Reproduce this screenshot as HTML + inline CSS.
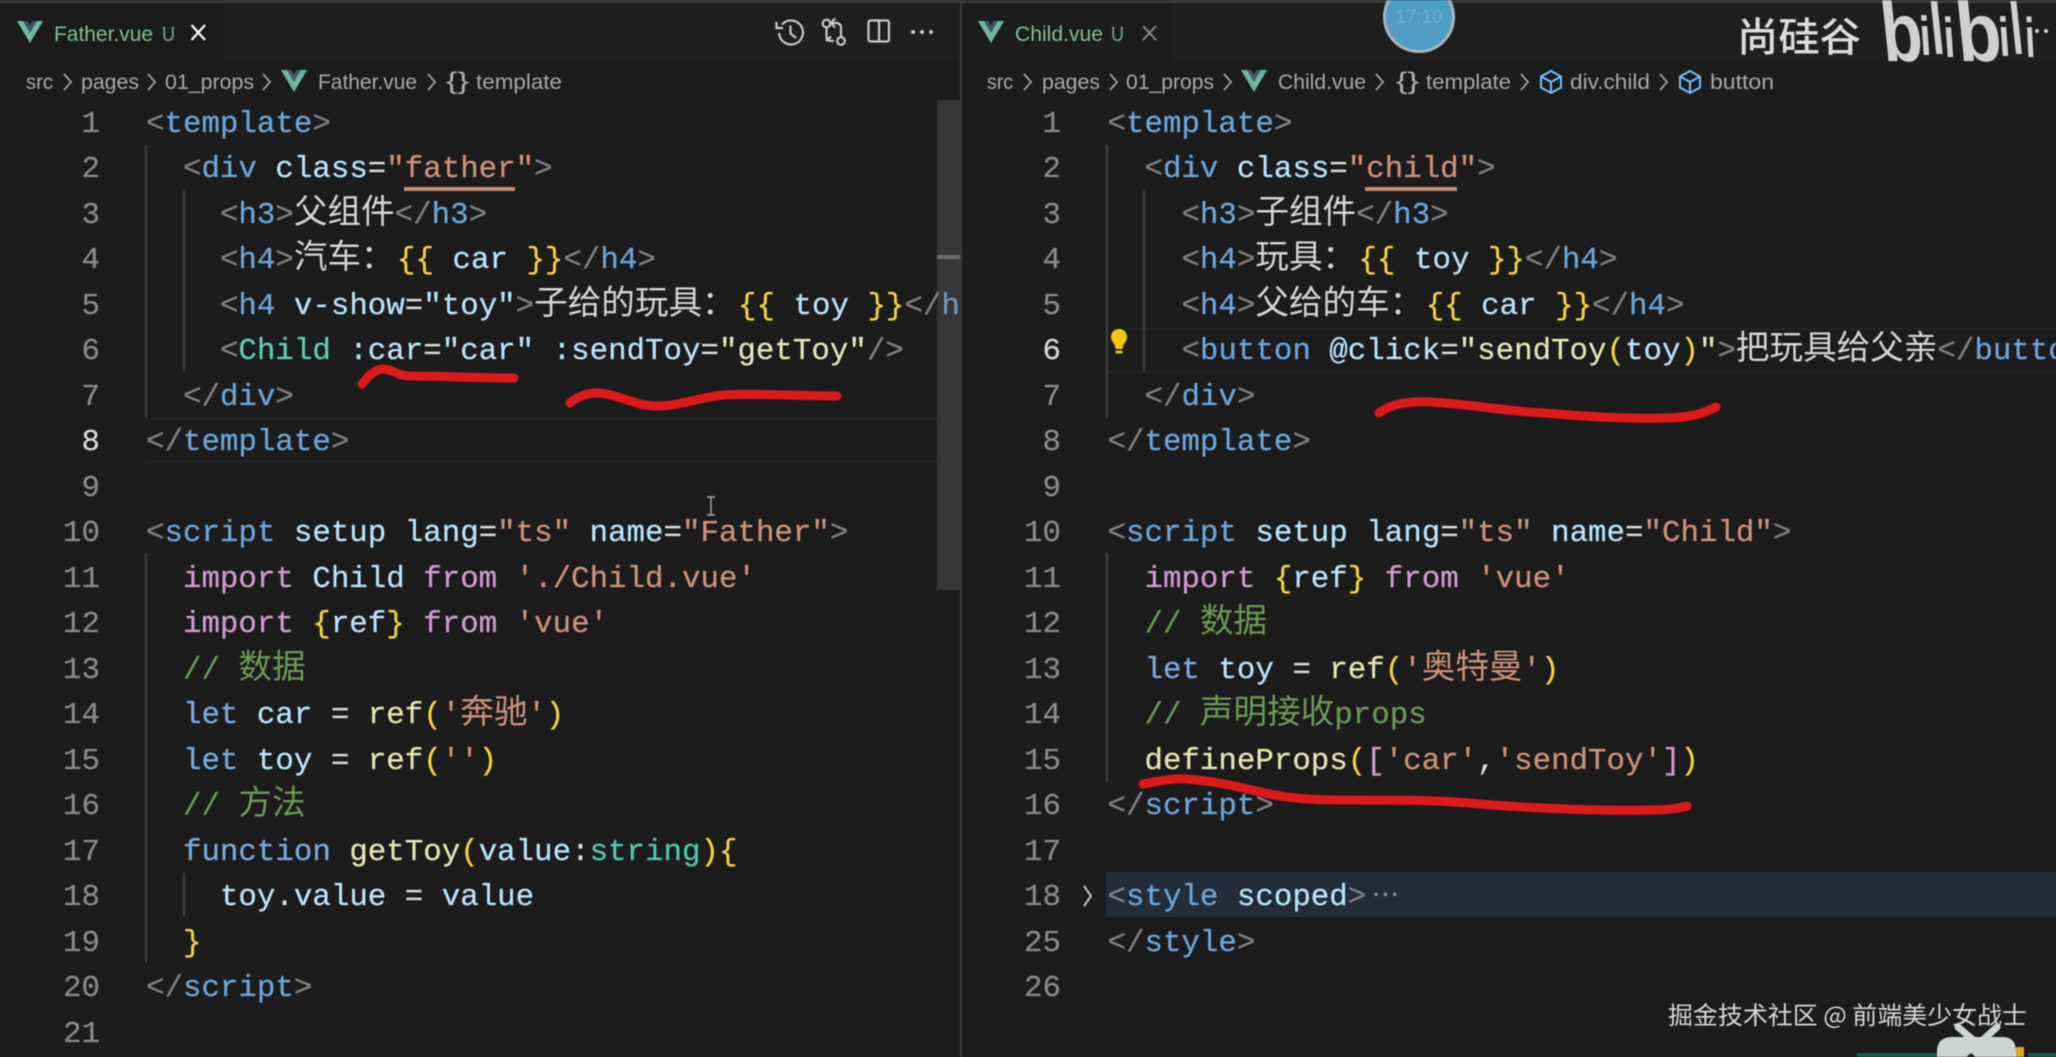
<!DOCTYPE html>
<html lang="zh"><head><meta charset="utf-8"><title>Father.vue / Child.vue</title>
<style>
html,body{margin:0;padding:0;background:#1c1c1c;width:2056px;height:1057px;overflow:hidden}
#root{position:absolute;left:0;top:0;width:2056px;height:1057px;overflow:hidden;background:#1c1c1c;filter:blur(.45px)}
.abs{position:absolute}
.pane{position:absolute;top:0;height:1057px;overflow:hidden}
.l{position:absolute;white-space:pre;height:45.5px;top:calc(101.5px + var(--n)*45.5px);font:30.8px/45.5px "Liberation Mono","Noto Sans CJK SC",monospace;color:#d4d4d4;-webkit-text-stroke:.25px}
.ln{position:absolute;white-space:pre;text-align:right;width:60px;top:calc(101.5px + var(--n)*45.5px);font:30.8px/45.5px "Liberation Mono",monospace;color:#8a8a8a;-webkit-text-stroke:.2px}
.x{left:146px}.rx{left:145.5px}
.lnL{left:40px}.lnR{left:39px}
.on{color:#d8d8d8}
.z{font-family:"Noto Sans CJK SC","Liberation Sans",sans-serif;font-size:33.6px;line-height:0;-webkit-text-stroke:0}
.q{font-family:"Noto Sans CJK SC","Liberation Sans",sans-serif;font-size:33px;line-height:0;display:inline-block;width:36px;-webkit-text-stroke:0}
.p{color:#808080}.t{color:#6aa5dc}.a{color:#b8e3fa}.s{color:#ce9178}.w{color:#d8d8d8}.y{color:#f5d33c}.f{color:#e4e4b4}.g{color:#6a9955}.k{color:#78a9e0}.m{color:#c58fc5}.n{color:#5fcdb4}.c{color:#4ec9b0}.b{color:#cf9bcf}
</style></head><body><div id="root">

<!-- chrome -->
<div class="abs" style="left:0;top:0;width:2056px;height:3px;background:#3c3c3c"></div>
<div class="abs" style="left:0;top:3px;width:2056px;height:59px;background:#1f1f1f"></div>
<div class="abs" style="left:0;top:3px;width:223px;height:59px;background:#1b1b1b"></div>
<div class="abs" style="left:962px;top:3px;width:210px;height:59px;background:#1c1c1c"></div>
<!-- active line highlights -->
<div class="abs" style="left:146px;top:418px;width:791px;height:41px;border:solid #242424;border-width:2px 0"></div>
<div class="abs" style="left:1106px;top:328px;width:950px;height:41px;border:solid #242424;border-width:2px 0"></div>
<div class="abs" style="left:1106px;top:872px;width:950px;height:45px;background:#232c38"></div>
<!-- indent guides -->
<div class="abs" style="left:145px;top:145px;width:1.5px;height:273px;background:#404040"></div>
<div class="abs" style="left:183px;top:190px;width:1.5px;height:182px;background:#404040"></div>
<div class="abs" style="left:145px;top:553px;width:1.5px;height:410px;background:#404040"></div>
<div class="abs" style="left:183px;top:873px;width:1.5px;height:44px;background:#404040"></div>
<div class="abs" style="left:1106px;top:145px;width:1.5px;height:273px;background:#404040"></div>
<div class="abs" style="left:1143px;top:190px;width:1.5px;height:182px;background:#404040"></div>
<div class="abs" style="left:1106px;top:553px;width:1.5px;height:229px;background:#404040"></div>
<!-- word highlights -->
<div class="abs" style="left:404px;top:187px;width:111px;height:4px;background:#c58f70"></div>
<div class="abs" style="left:1365px;top:187px;width:92px;height:4px;background:#c58f70"></div>

<!-- LEFT PANE -->
<div class="pane" style="left:0;width:960px">
<div class="ln lnL" style="--n:0">1</div>
<div class="ln lnL" style="--n:1">2</div>
<div class="ln lnL" style="--n:2">3</div>
<div class="ln lnL" style="--n:3">4</div>
<div class="ln lnL" style="--n:4">5</div>
<div class="ln lnL" style="--n:5">6</div>
<div class="ln lnL" style="--n:6">7</div>
<div class="ln lnL on" style="--n:7">8</div>
<div class="ln lnL" style="--n:8">9</div>
<div class="ln lnL" style="--n:9">10</div>
<div class="ln lnL" style="--n:10">11</div>
<div class="ln lnL" style="--n:11">12</div>
<div class="ln lnL" style="--n:12">13</div>
<div class="ln lnL" style="--n:13">14</div>
<div class="ln lnL" style="--n:14">15</div>
<div class="ln lnL" style="--n:15">16</div>
<div class="ln lnL" style="--n:16">17</div>
<div class="ln lnL" style="--n:17">18</div>
<div class="ln lnL" style="--n:18">19</div>
<div class="ln lnL" style="--n:19">20</div>
<div class="ln lnL" style="--n:20">21</div>

<div class="l x" style="--n:0"><span class="p">&lt;</span><span class="t">template</span><span class="p">&gt;</span></div>
<div class="l x" style="--n:1">  <span class="p">&lt;</span><span class="t">div</span> <span class="a">class</span><span class="w">=</span><span class="s">"father"</span><span class="p">&gt;</span></div>
<div class="l x" style="--n:2">    <span class="p">&lt;</span><span class="t">h3</span><span class="p">&gt;</span><span class="z">父组件</span><span class="p">&lt;/</span><span class="t">h3</span><span class="p">&gt;</span></div>
<div class="l x" style="--n:3">    <span class="p">&lt;</span><span class="t">h4</span><span class="p">&gt;</span><span class="z">汽车</span><span class="q">：</span><span class="y">{{</span> <span class="a">car</span> <span class="y">}}</span><span class="p">&lt;/</span><span class="t">h4</span><span class="p">&gt;</span></div>
<div class="l x" style="--n:4">    <span class="p">&lt;</span><span class="t">h4</span> <span class="a">v-show</span><span class="w">=</span><span class="a">"toy"</span><span class="p">&gt;</span><span class="z">子给的玩具</span><span class="q">：</span><span class="y">{{</span> <span class="a">toy</span> <span class="y">}}</span><span class="p">&lt;/</span><span class="t">h4</span><span class="p">&gt;</span></div>
<div class="l x" style="--n:5">    <span class="p">&lt;</span><span class="n">Child</span> <span class="a">:car</span><span class="w">=</span><span class="a">"car"</span> <span class="a">:sendToy</span><span class="w">=</span><span class="f">"getToy"</span><span class="p">/&gt;</span></div>
<div class="l x" style="--n:6">  <span class="p">&lt;/</span><span class="t">div</span><span class="p">&gt;</span></div>
<div class="l x" style="--n:7"><span class="p">&lt;/</span><span class="t">template</span><span class="p">&gt;</span></div>
<div class="l x" style="--n:9"><span class="p">&lt;</span><span class="t">script</span> <span class="a">setup</span> <span class="a">lang</span><span class="w">=</span><span class="s">"ts"</span> <span class="a">name</span><span class="w">=</span><span class="s">"Father"</span><span class="p">&gt;</span></div>
<div class="l x" style="--n:10">  <span class="b">import</span> <span class="a">Child</span> <span class="b">from</span> <span class="s">'./Child.vue'</span></div>
<div class="l x" style="--n:11">  <span class="b">import</span> <span class="y">{</span><span class="a">ref</span><span class="y">}</span> <span class="b">from</span> <span class="s">'vue'</span></div>
<div class="l x" style="--n:12">  <span class="g">// <span class="z">数据</span></span></div>
<div class="l x" style="--n:13">  <span class="k">let</span> <span class="a">car</span> <span class="w">=</span> <span class="f">ref</span><span class="y">(</span><span class="s">'<span class="z">奔驰</span>'</span><span class="y">)</span></div>
<div class="l x" style="--n:14">  <span class="k">let</span> <span class="a">toy</span> <span class="w">=</span> <span class="f">ref</span><span class="y">(</span><span class="s">''</span><span class="y">)</span></div>
<div class="l x" style="--n:15">  <span class="g">// <span class="z">方法</span></span></div>
<div class="l x" style="--n:16">  <span class="k">function</span> <span class="f">getToy</span><span class="y">(</span><span class="a">value</span><span class="w">:</span><span class="c">string</span><span class="y">){</span></div>
<div class="l x" style="--n:17">    <span class="a">toy</span><span class="w">.</span><span class="a">value</span> <span class="w">=</span> <span class="a">value</span></div>
<div class="l x" style="--n:18">  <span class="y">}</span></div>
<div class="l x" style="--n:19"><span class="p">&lt;/</span><span class="t">script</span><span class="p">&gt;</span></div>
</div>
<!-- scrollbar -->
<div class="abs" style="left:937px;top:100px;width:23px;height:490px;background:rgba(121,121,121,.28)"></div>
<div class="abs" style="left:937px;top:255px;width:23px;height:4px;background:#6d6d6d"></div>
<div class="abs" style="left:960px;top:0;width:2px;height:1057px;background:#3b3b3b"></div>

<!-- RIGHT PANE -->
<div class="pane" style="left:962px;width:1094px">
<div class="ln lnR" style="--n:0">1</div>
<div class="ln lnR" style="--n:1">2</div>
<div class="ln lnR" style="--n:2">3</div>
<div class="ln lnR" style="--n:3">4</div>
<div class="ln lnR" style="--n:4">5</div>
<div class="ln lnR on" style="--n:5">6</div>
<div class="ln lnR" style="--n:6">7</div>
<div class="ln lnR" style="--n:7">8</div>
<div class="ln lnR" style="--n:8">9</div>
<div class="ln lnR" style="--n:9">10</div>
<div class="ln lnR" style="--n:10">11</div>
<div class="ln lnR" style="--n:11">12</div>
<div class="ln lnR" style="--n:12">13</div>
<div class="ln lnR" style="--n:13">14</div>
<div class="ln lnR" style="--n:14">15</div>
<div class="ln lnR" style="--n:15">16</div>
<div class="ln lnR" style="--n:16">17</div>
<div class="ln lnR" style="--n:17">18</div>
<div class="ln lnR" style="--n:18">25</div>
<div class="ln lnR" style="--n:19">26</div>

<div class="l rx" style="--n:0"><span class="p">&lt;</span><span class="t">template</span><span class="p">&gt;</span></div>
<div class="l rx" style="--n:1">  <span class="p">&lt;</span><span class="t">div</span> <span class="a">class</span><span class="w">=</span><span class="s">"child"</span><span class="p">&gt;</span></div>
<div class="l rx" style="--n:2">    <span class="p">&lt;</span><span class="t">h3</span><span class="p">&gt;</span><span class="z">子组件</span><span class="p">&lt;/</span><span class="t">h3</span><span class="p">&gt;</span></div>
<div class="l rx" style="--n:3">    <span class="p">&lt;</span><span class="t">h4</span><span class="p">&gt;</span><span class="z">玩具</span><span class="q">：</span><span class="y">{{</span> <span class="a">toy</span> <span class="y">}}</span><span class="p">&lt;/</span><span class="t">h4</span><span class="p">&gt;</span></div>
<div class="l rx" style="--n:4">    <span class="p">&lt;</span><span class="t">h4</span><span class="p">&gt;</span><span class="z">父给的车</span><span class="q">：</span><span class="y">{{</span> <span class="a">car</span> <span class="y">}}</span><span class="p">&lt;/</span><span class="t">h4</span><span class="p">&gt;</span></div>
<div class="l rx" style="--n:5">    <span class="p">&lt;</span><span class="t">button</span> <span class="a">@click</span><span class="w">=</span><span class="f">"sendToy</span><span class="y">(</span><span class="a">toy</span><span class="y">)</span><span class="f">"</span><span class="p">&gt;</span><span class="z">把玩具给父亲</span><span class="p">&lt;/</span><span class="t">button</span><span class="p">&gt;</span></div>
<div class="l rx" style="--n:6">  <span class="p">&lt;/</span><span class="t">div</span><span class="p">&gt;</span></div>
<div class="l rx" style="--n:7"><span class="p">&lt;/</span><span class="t">template</span><span class="p">&gt;</span></div>
<div class="l rx" style="--n:9"><span class="p">&lt;</span><span class="t">script</span> <span class="a">setup</span> <span class="a">lang</span><span class="w">=</span><span class="s">"ts"</span> <span class="a">name</span><span class="w">=</span><span class="s">"Child"</span><span class="p">&gt;</span></div>
<div class="l rx" style="--n:10">  <span class="b">import</span> <span class="y">{</span><span class="a">ref</span><span class="y">}</span> <span class="b">from</span> <span class="s">'vue'</span></div>
<div class="l rx" style="--n:11">  <span class="g">// <span class="z">数据</span></span></div>
<div class="l rx" style="--n:12">  <span class="k">let</span> <span class="a">toy</span> <span class="w">=</span> <span class="f">ref</span><span class="y">(</span><span class="s">'<span class="z">奥特曼</span>'</span><span class="y">)</span></div>
<div class="l rx" style="--n:13">  <span class="g">// <span class="z">声明接收</span>props</span></div>
<div class="l rx" style="--n:14">  <span class="f">defineProps</span><span class="y">(</span><span class="b">[</span><span class="s">'car'</span><span class="w">,</span><span class="s">'sendToy'</span><span class="b">]</span><span class="y">)</span></div>
<div class="l rx" style="--n:15"><span class="p">&lt;/</span><span class="t">script</span><span class="p">&gt;</span></div>
<div class="l rx" style="--n:17"><span class="p">&lt;</span><span class="t">style</span> <span class="a">scoped</span><span class="p">&gt;</span></div>
<div class="l rx" style="--n:18"><span class="p">&lt;/</span><span class="t">style</span><span class="p">&gt;</span></div>
</div>

<!-- overlay svg: tabs, breadcrumbs, icons, strokes -->
<svg class="abs" style="left:0;top:0" width="2056" height="1057" viewBox="0 0 2056 1057" font-family="'Liberation Sans',sans-serif">
<defs>
<g id="vue"><path d="M0 0H8L13 8.5 18 0H26L13 22Z" fill="#6fb9a0"/><path d="M6 0H10.5L13 4.5 15.5 0H20L13 12Z" fill="#3f5666"/></g>
<g id="box" fill="none" stroke="#75beff" stroke-width="2"><path d="M12 1.5L22 7V18L12 23.5 2 18V7ZM2 7L12 12.5 22 7M12 12.5V23.5"/></g>
</defs>
<!-- left tab -->
<use href="#vue" x="17" y="21"/>
<text x="54" y="41" font-size="21" fill="#7dbf95" textLength="99" lengthAdjust="spacingAndGlyphs">Father.vue</text>
<text x="162" y="41" font-size="21" fill="#6fa888" textLength="13" lengthAdjust="spacingAndGlyphs">U</text>
<path d="M191.500 25L205 40M205 25L191.500 40" stroke="#f2f2f2" stroke-width="2.400" fill="none"/>
<!-- left actions -->
<g fill="none" stroke="#c8c8c8" stroke-width="2.200">
<path d="M782 24.500A12 12 0 1 1 779 33M776.500 22V28H783M790.500 25.500V33.500L796 38"/>
<circle cx="826.500" cy="23.500" r="3.800"/><circle cx="841" cy="41" r="3.800"/>
<path d="M826.500 27.500V36Q826.500 41 832 41H834M831 36.500L826 41M841 37V28Q841 23 836 23H832M835 18.500L831 23 835 27.500"/>
<rect x="868.500" y="20.500" width="20.500" height="21" rx="2"/><path d="M879 20.500V41.500"/>
</g>
<g fill="#c8c8c8"><circle cx="913" cy="32" r="2"/><circle cx="922" cy="32" r="2"/><circle cx="931" cy="32" r="2"/></g>
<!-- left breadcrumb -->
<g font-size="21" fill="#a8a8a8">
<text x="26" y="89" textLength="27" lengthAdjust="spacingAndGlyphs">src</text>
<text x="81" y="89" textLength="58" lengthAdjust="spacingAndGlyphs">pages</text>
<text x="165" y="89" textLength="89" lengthAdjust="spacingAndGlyphs">01_props</text>
<text x="318" y="89" textLength="99" lengthAdjust="spacingAndGlyphs">Father.vue</text>
<text x="446" y="89" font-size="24" textLength="23" lengthAdjust="spacingAndGlyphs" fill="#b0b0b0">{}</text>
<text x="476" y="89" textLength="86" lengthAdjust="spacingAndGlyphs">template</text>
</g>
<g fill="none" stroke="#a0a0a0" stroke-width="1.800">
<path d="M64 74L71 82 64 90M148 74L155 82 148 90M263 74L270 82 263 90M428 74L435 82 428 90"/>
</g>
<use href="#vue" x="281" y="70"/>

<!-- right tab -->
<use href="#vue" x="978" y="21"/>
<text x="1015" y="41" font-size="21" fill="#7dbf95" textLength="88" lengthAdjust="spacingAndGlyphs">Child.vue</text>
<text x="1111" y="41" font-size="21" fill="#6fa888" textLength="13" lengthAdjust="spacingAndGlyphs">U</text>
<path d="M1143 26L1156 40M1156 26L1143 40" stroke="#8a8a8a" stroke-width="2" fill="none"/>
<!-- right breadcrumb -->
<g font-size="21" fill="#a8a8a8">
<text x="987" y="89" textLength="26" lengthAdjust="spacingAndGlyphs">src</text>
<text x="1042" y="89" textLength="58" lengthAdjust="spacingAndGlyphs">pages</text>
<text x="1126" y="89" textLength="88" lengthAdjust="spacingAndGlyphs">01_props</text>
<text x="1278" y="89" textLength="88" lengthAdjust="spacingAndGlyphs">Child.vue</text>
<text x="1396" y="89" font-size="24" textLength="23" lengthAdjust="spacingAndGlyphs" fill="#b0b0b0">{}</text>
<text x="1426" y="89" textLength="85" lengthAdjust="spacingAndGlyphs">template</text>
<text x="1570" y="89" textLength="80" lengthAdjust="spacingAndGlyphs">div.child</text>
<text x="1710" y="89" textLength="64" lengthAdjust="spacingAndGlyphs">button</text>
</g>
<g fill="none" stroke="#a0a0a0" stroke-width="1.800">
<path d="M1024 74L1031 82 1024 90M1110 74L1117 82 1110 90M1224 74L1231 82 1224 90M1376 74L1383 82 1376 90M1521 74L1528 82 1521 90M1660 74L1667 82 1660 90"/>
</g>
<use href="#vue" x="1241" y="70"/>
<use href="#box" x="1539" y="69.500"/>
<use href="#box" x="1678" y="69.500"/>

<!-- clock widget -->
<circle cx="1419" cy="17" r="34.500" fill="#4f9cc4" stroke="#a9b3c2" stroke-width="3"/>
<text x="1419" y="23" font-size="19" fill="#72adcd" text-anchor="middle">17:10</text>

<!-- code overlays -->
<text x="1373" y="902" font-size="22" fill="#8a8f96" textLength="26" lengthAdjust="spacing" font-weight="bold">···</text>
<path d="M1084 886L1091 896 1084 906" fill="none" stroke="#c0c0c0" stroke-width="2"/>
<path d="M1119 329c-5 0-8 3.500-8 8 0 4 3 6 4 9 0 1 0 3 1 3h6c1 0 1-2 1-3 1-3 4-5 4-9 0-4.500-3-8-8-8z" fill="#f5c518"/>
<rect x="1115.500" y="350.500" width="7" height="3" fill="#d8b64a"/>
<path d="M707 497H715M711 497V515M707 515H715" stroke="#a8a8a8" stroke-width="1.400" fill="none"/>

<!-- red annotations -->
<g fill="none" stroke="#dd1a1a" stroke-width="9" stroke-linecap="round" stroke-linejoin="round">
<path d="M362 384C368 376 376 369 383 369 392 369 398 376 410 376 440 376 480 378 514 378"/>
<path d="M570 403C578 396 590 392 600 393 620 395 635 406 657 406 680 406 700 397 724 395 760 393 800 396 837 396"/>
<path d="M1379 413C1392 403 1412 401 1430 402 1470 404 1510 412 1545 413 1590 417 1630 419 1665 418 1690 418 1705 413 1716 407"/>
<path d="M1143 784C1155 782 1170 778 1185 779 1215 781 1235 786 1260 792 1285 798 1310 800 1345 800 1400 800 1440 800 1480 804 1540 809 1610 811 1650 810 1670 810 1680 808 1687 806"/>
</g>

<!-- watermarks -->
<text x="1737" y="51" font-size="40" fill="#dcdcdc" font-family="'Noto Sans CJK SC',sans-serif" textLength="124" lengthAdjust="spacingAndGlyphs" font-weight="500">尚硅谷</text>
<g font-family="'Liberation Sans',sans-serif" font-weight="bold" fill="#d0d0d0">
<text transform="translate(1884 61) skewX(6)" font-size="84" textLength="41" lengthAdjust="spacingAndGlyphs">b</text>
<text transform="translate(1921 55) skewX(4)" font-size="55" textLength="11" lengthAdjust="spacingAndGlyphs">i</text>
<text transform="translate(1933 54) skewX(6)" font-size="73" textLength="13" lengthAdjust="spacingAndGlyphs">l</text>
<text transform="translate(1945 57) skewX(4)" font-size="56" textLength="11" lengthAdjust="spacingAndGlyphs">i</text>
<text transform="translate(1959 61) skewX(6)" font-size="84" textLength="45" lengthAdjust="spacingAndGlyphs">b</text>
<text transform="translate(2000 56) skewX(4)" font-size="55" textLength="11" lengthAdjust="spacingAndGlyphs">i</text>
<text transform="translate(2013 54) skewX(6)" font-size="73" textLength="12" lengthAdjust="spacingAndGlyphs">l</text>
<text transform="translate(2026 57) skewX(3)" font-size="56" textLength="10" lengthAdjust="spacingAndGlyphs">i</text>
</g>
<circle cx="2037" cy="31" r="2" fill="#cfcfcf"/><circle cx="2046" cy="31" r="2" fill="#cfcfcf"/>
<text x="1668" y="1024" font-size="24.500" fill="#d6d6d6" font-family="'Noto Sans CJK SC',sans-serif" textLength="359" lengthAdjust="spacingAndGlyphs">掘金技术社区 @ 前端美少女战士</text>

<!-- mascot corner -->
<rect x="1857" y="1053" width="81" height="4" fill="#0f5e52"/>
<rect x="2028" y="1053" width="28" height="4" fill="#0f5e52"/>
<path d="M1958 1027L1972 1039M1997 1027L1984 1039" stroke="#cfd3d3" stroke-width="7" stroke-linecap="round"/>
<path d="M1937 1057V1052Q1937 1037 1952 1037H2003Q2016 1037 2016 1052V1057Z" fill="#cfd3d3"/>
<path d="M1967 1057Q1971 1050 1975 1057Z" fill="#1f2b2b"/>
<rect x="2016" y="1047" width="8" height="10" fill="#e0a030"/>
</svg>
</div></body></html>
